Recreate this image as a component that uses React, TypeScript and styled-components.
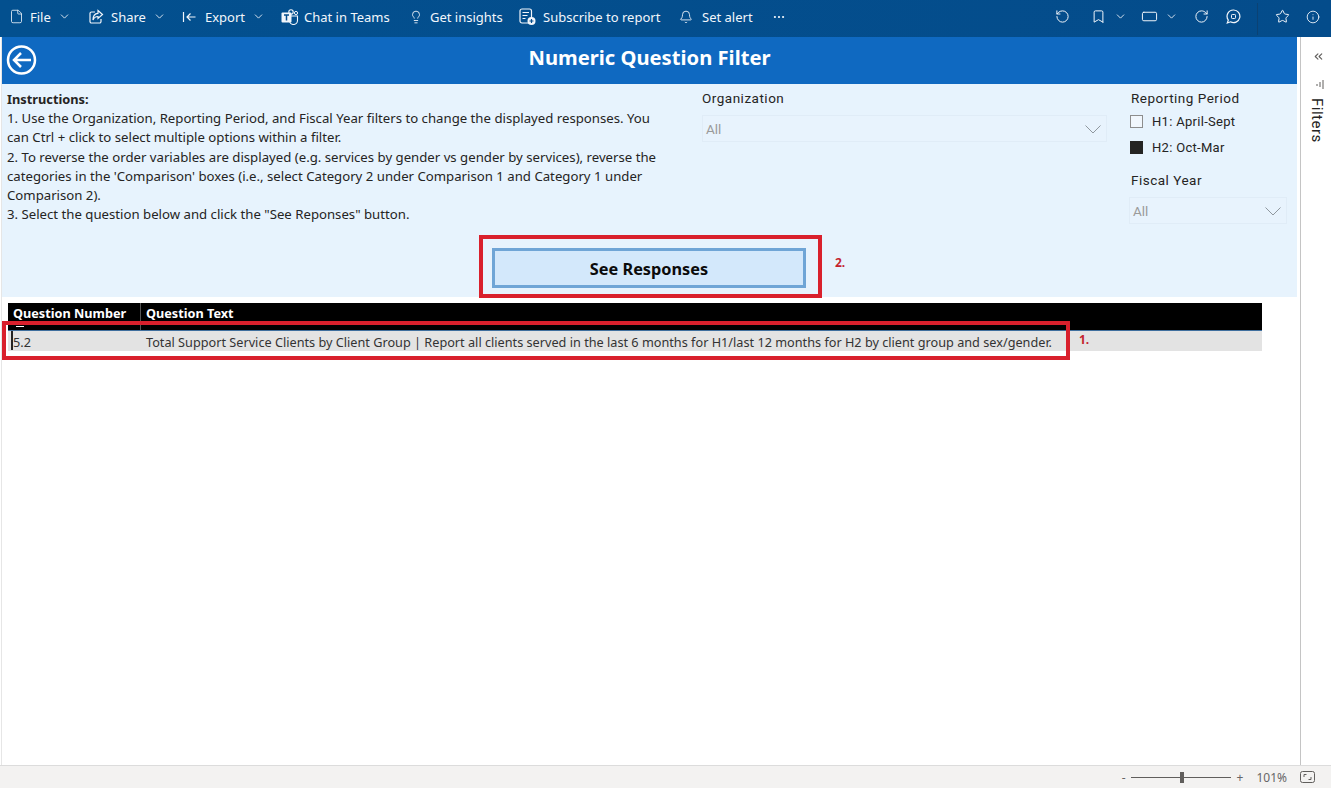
import React from 'react';
import styled, { createGlobalStyle } from 'styled-components';
import {
    Bell,
    Bookmark,
    ChevronDown,
    ChevronsLeft,
    Ellipsis,
    File,
    Info,
    Lightbulb,
    RectangleHorizontal,
    RotateCcw,
    RotateCw,
    Star,
} from 'lucide-react';

const GlobalStyle = createGlobalStyle`
    html, body {
        margin: 0;
        padding: 0;
        height: 100%;
        background: #ffffff;
        font-family: "Noto Sans", "Open Sans", sans-serif;
        overflow: hidden;
    }
`;

const Shell = styled.div`
    width: 1331px;
    height: 788px;
    display: flex;
    flex-direction: column;
    position: relative;
`;

const Toolbar = styled.div`
    height: 37px;
    flex: none;
    box-sizing: border-box;
    display: flex;
    align-items: center;
    padding: 0 11px 4px 9px;
    background: linear-gradient(90deg, #03508f, #044c8b);
    color: #f2f6fb;
    font-size: 13px;
`;

const ToolItem = styled.div<{ $w: number }>`
    width: ${(p) => p.$w}px;
    flex: none;
    display: flex;
    align-items: center;
    white-space: nowrap;
    svg { flex: none; }
`;

const ToolLabel = styled.span<{ $gap: number }>`
    margin-left: ${(p) => p.$gap}px;
    margin-right: 7px;
`;

const ToolChevron = styled.span<{ $gap: number }>`
    margin-left: ${(p) => p.$gap}px;
    display: flex;
`;

const ToolSpacer = styled.div`
    flex: 1;
`;

const ToolDivider = styled.div`
    width: 1px;
    height: 32px;
    margin: 4px 17px 0 13px;
    background: #0b4274;
`;

const Middle = styled.div`
    flex: 1;
    min-height: 0;
    display: flex;
`;

const Canvas = styled.div`
    width: 1295px;
    margin-left: 1px;
    border-left: 1px solid #e6e6e6;
    flex: none;
    display: flex;
    flex-direction: column;
`;

const Banner = styled.div`
    height: 47px;
    flex: none;
    box-sizing: border-box;
    background: #0f69c1;
    display: flex;
    align-items: center;
    justify-content: center;
    position: relative;
    color: #ffffff;
    font-size: 20.2px;
    font-weight: 700;
    padding-bottom: 8px;
`;

const BackButton = styled.svg`
    position: absolute;
    left: 4px;
    top: 7px;
`;

const FilterArea = styled.div`
    height: 213px;
    flex: none;
    background: #e7f3fd;
    display: flex;
    flex-direction: column;
`;

const FilterColumns = styled.div`
    display: grid;
    grid-template-columns: 700px 405px 1fr;
    height: 151px;
`;

const Instructions = styled.div`
    padding: 6px 0 0 5px;
    font-size: 13.2px;
    line-height: 19.2px;
    color: #252423;
    white-space: nowrap;
`;

const InstructionsTitle = styled.div`
    font-weight: 700;
    font-size: 12.8px;
`;

const SlicerLabel = styled.div`
    font-family: "Roboto", sans-serif;
    font-size: 13.5px;
    letter-spacing: 0.5px;
    color: #252423;
    line-height: 16px;
`;

const OrgColumn = styled.div`
    padding-top: 6px;
`;

const Dropdown = styled.div<{ $w: number }>`
    width: ${(p) => p.$w}px;
    height: 27px;
    box-sizing: border-box;
    margin-top: 9px;
    padding: 1px 5px 0 3px;
    border: 1px solid #e0ecf7;
    background: #e8f3fd;
    display: flex;
    align-items: center;
    justify-content: space-between;
    font-family: "Roboto", sans-serif;
    font-size: 13.5px;
    color: #9a9a9a;
`;

const FiscalDropdown = styled(Dropdown)`
    margin-left: -2px;
`;

const PeriodColumn = styled.div`
    padding: 6px 0 0 24px;
`;

const CheckRow = styled.div`
    display: flex;
    align-items: center;
    height: 26px;
    font-family: "Roboto", sans-serif;
    font-size: 13px;
    letter-spacing: 0.3px;
    color: #252423;
`;

const CheckList = styled.div`
    margin-top: 2px;
`;

const CheckBox = styled.span<{ $on?: boolean }>`
    width: 13px;
    height: 13px;
    box-sizing: border-box;
    flex: none;
    margin: 0 9px 0 -1px;
    border: 1px solid ${(p) => (p.$on ? '#252423' : '#8d8d8d')};
    background: ${(p) => (p.$on ? '#252423' : '#f1f7fd')};
`;

const FiscalLabel = styled(SlicerLabel)`
    margin-top: 12px;
`;

const ButtonRow = styled.div`
    display: flex;
    justify-content: center;
`;

const ResponsesButton = styled.div`
    width: 314px;
    height: 40px;
    margin-top: 13px;
    margin-left: -1px;
    box-sizing: border-box;
    border: 3px solid #6fa5d6;
    background: #d3e8fb;
    display: flex;
    align-items: center;
    justify-content: center;
    padding-top: 1px;
    font-size: 16.3px;
    font-weight: 700;
    color: #0b0b0b;
`;

const ReportBody = styled.div`
    flex: 1;
    background: #ffffff;
    padding: 6px 0 0 6px;
`;

const Table = styled.div`
    width: 1254px;
    font-size: 12.7px;
`;

const HeaderRow = styled.div`
    height: 27px;
    background: #000000;
    color: #ffffff;
    font-weight: 700;
    display: grid;
    grid-template-columns: 132px 1fr;
    border-bottom: 1px solid #3f6f9e;
    position: relative;
`;

const HeaderCell = styled.div`
    display: flex;
    align-items: center;
    padding: 0 0 8px 5px;
    & + & { border-left: 1px solid #555555; }
`;

const SortMark = styled.span`
    position: absolute;
    left: 8px;
    bottom: 3px;
    width: 8px;
    height: 1px;
    background: #ffffff;
`;

const DataRow = styled.div`
    height: 20px;
    background: #e3e3e3;
    color: #333333;
    display: grid;
    grid-template-columns: 132px 1fr;
    align-items: center;
    position: relative;
`;

const DataCell = styled.div`
    padding: 1px 0 0 5px;
    white-space: nowrap;
`;

const TextCell = styled(DataCell)`
    padding-left: 6px;
`;

const RowMarker = styled.span`
    position: absolute;
    left: 3px;
    top: 0;
    bottom: 1px;
    width: 2px;
    background: #252423;
`;

const RedBox = styled.div<{ $l: number; $t: number; $w: number; $h: number }>`
    position: absolute;
    left: ${(p) => p.$l}px;
    top: ${(p) => p.$t}px;
    width: ${(p) => p.$w}px;
    height: ${(p) => p.$h}px;
    box-sizing: border-box;
    border: 4px solid #d9202c;
    pointer-events: none;
`;

const RedNumber = styled.span<{ $l: number; $t: number }>`
    position: absolute;
    left: ${(p) => p.$l}px;
    top: ${(p) => p.$t}px;
    color: #c4242e;
    font-size: 12px;
    font-weight: 700;
    line-height: 14px;
`;

const FiltersPane = styled.div`
    width: 31px;
    margin-left: 3px;
    flex: none;
    box-sizing: border-box;
    border-left: 1px solid #c4c4c4;
    display: flex;
    flex-direction: column;
    align-items: center;
    padding: 13px 0 0 2px;
    color: #252423;
`;

const CollapseIcon = styled(ChevronsLeft)`
    color: #605e5c;
    margin-left: 3px;
`;

const FilterGlyph = styled.svg`
    margin: 17px 0 0 6px;
`;

const FiltersText = styled.div`
    writing-mode: vertical-rl;
    font-family: "Roboto", sans-serif;
    font-size: 15px;
    letter-spacing: 0.5px;
    margin-top: 9px;
`;

const StatusBar = styled.div`
    height: 23px;
    flex: none;
    box-sizing: border-box;
    background: #f3f2f1;
    border-top: 1px solid #dcdcdc;
    display: flex;
    align-items: center;
    justify-content: flex-end;
    padding-right: 16px;
    font-size: 12px;
    color: #666666;
`;

const ZoomTrack = styled.div`
    width: 100px;
    height: 1px;
    background: #605e5c;
    margin: 0 6px 0 5px;
    position: relative;
`;

const ZoomThumb = styled.span`
    position: absolute;
    left: 49px;
    top: -5px;
    width: 4px;
    height: 11px;
    background: #605e5c;
`;

const ZoomPercent = styled.span`
    margin: 0 13px 0 13px;
`;

const ShareIcon = () => (
    <svg width="16" height="16" viewBox="0 0 16 16" fill="none" stroke="currentColor" strokeWidth="1.2">
        <path d="M7 3H3.500A1.500 1.500 0 0 0 2 4.500v8A1.500 1.500 0 0 0 3.500 14h8a1.500 1.500 0 0 0 1.500-1.500V10" />
        <path d="M10 1.500 14.500 5.500 10 9.500V7.500C7.500 7.500 6 8.500 5 11c0-4 2-6.500 5-6.700Z" />
    </svg>
);

const ExportIcon = () => (
    <svg width="15" height="14" viewBox="0 0 15 14" fill="none" stroke="currentColor" strokeWidth="1.2">
        <path d="M1.500 2v10M13.500 7H5M8.500 3.500 5 7l3.500 3.500" />
    </svg>
);

const TeamsIcon = () => (
    <svg width="18" height="16" viewBox="0 0 18 16" fill="none">
        <circle cx="10" cy="3" r="2.200" stroke="currentColor" strokeWidth="1.100" />
        <circle cx="15" cy="4" r="1.600" stroke="currentColor" strokeWidth="1" />
        <path d="M8 7h8.500v4.500a4 4 0 0 1-8 0Z" stroke="currentColor" strokeWidth="1.100" />
        <rect x="0.500" y="3.500" width="10" height="10" rx="1" fill="currentColor" />
        <path d="M3 6h5M5.500 6v5.500" stroke="#044c8b" strokeWidth="1.500" />
    </svg>
);

const SubscribeIcon = () => (
    <svg width="17" height="18" viewBox="0 0 17 18" fill="none">
        <rect x="1" y="1" width="11.500" height="14" rx="2" stroke="currentColor" strokeWidth="1.200" />
        <path d="M3.500 4.500h6.500M3.500 7.500h5M3.500 10.500h3" stroke="currentColor" strokeWidth="1.200" />
        <circle cx="12.500" cy="13" r="4" fill="currentColor" />
        <path d="M10.500 13h4M12.500 11v4" stroke="#044c8b" strokeWidth="1.200" />
    </svg>
);

const CommentIcon = () => (
    <svg width="15" height="15" viewBox="0 0 15 15" fill="none">
        <path
            d="M7.500 1a6.300 6.300 0 1 1-3 11.800L1.300 14l1-3A6.300 6.300 0 0 1 7.500 1Z"
            stroke="currentColor"
            strokeWidth="1.200"
        />
        <rect x="5.500" y="5.500" width="4" height="4" rx="0.800" stroke="currentColor" strokeWidth="1" />
    </svg>
);

const DropChevron = () => (
    <svg width="16" height="9" viewBox="0 0 16 9" fill="none" stroke="#8f979e" strokeWidth="1">
        <path d="M0.500 0.500 8 8 15.500 0.500" />
    </svg>
);

const chevron = <ChevronDown size={13} strokeWidth={1.6} />;

const instructionLines = [
    '1. Use the Organization, Reporting Period, and Fiscal Year filters to change the displayed responses. You',
    'can Ctrl + click to select multiple options within a filter.',
    '2. To reverse the order variables are displayed (e.g. services by gender vs gender by services), reverse the',
    "categories in the 'Comparison' boxes (i.e., select Category 2 under Comparison 1 and Category 1 under",
    'Comparison 2).',
    '3. Select the question below and click the "See Reponses" button.',
];

const App: React.FC = () => {
    return (
        <Shell>
            <GlobalStyle />
            <Toolbar>
                <ToolItem $w={79}>
                    <File size={15} strokeWidth={1.3} />
                    <ToolLabel $gap={6}>File</ToolLabel>
                    {chevron}
                </ToolItem>
                <ToolItem $w={94}>
                    <ShareIcon />
                    <ToolLabel $gap={7}>Share</ToolLabel>
                    {chevron}
                </ToolItem>
                <ToolItem $w={99}>
                    <ExportIcon />
                    <ToolLabel $gap={8}>Export</ToolLabel>
                    {chevron}
                </ToolItem>
                <ToolItem $w={128}>
                    <TeamsIcon />
                    <ToolLabel $gap={5}>Chat in Teams</ToolLabel>
                </ToolItem>
                <ToolItem $w={110}>
                    <Lightbulb size={14} strokeWidth={1.5} />
                    <ToolLabel $gap={7}>Get insights</ToolLabel>
                </ToolItem>
                <ToolItem $w={160}>
                    <SubscribeIcon />
                    <ToolLabel $gap={7}>Subscribe to report</ToolLabel>
                </ToolItem>
                <ToolItem $w={93}>
                    <Bell size={14} strokeWidth={1.5} />
                    <ToolLabel $gap={9}>Set alert</ToolLabel>
                </ToolItem>
                <Ellipsis size={14} strokeWidth={1.8} />
                <ToolSpacer />
                <ToolItem $w={36}>
                    <RotateCcw size={15} strokeWidth={1.6} />
                </ToolItem>
                <ToolItem $w={50}>
                    <Bookmark size={15} strokeWidth={1.6} />
                    <ToolChevron $gap={8}>{chevron}</ToolChevron>
                </ToolItem>
                <ToolItem $w={53}>
                    <RectangleHorizontal size={17} strokeWidth={1.4} />
                    <ToolChevron $gap={7}>{chevron}</ToolChevron>
                </ToolItem>
                <ToolItem $w={32}>
                    <RotateCw size={15} strokeWidth={1.6} />
                </ToolItem>
                <ToolItem $w={18}>
                    <CommentIcon />
                </ToolItem>
                <ToolDivider />
                <ToolItem $w={31}>
                    <Star size={15} strokeWidth={1.6} />
                </ToolItem>
                <Info size={14} strokeWidth={1.5} />
            </Toolbar>
            <Middle>
                <Canvas>
                    <Banner>
                        <BackButton width="32" height="32" viewBox="0 0 32 32" fill="none" stroke="#ffffff">
                            <circle cx="15.500" cy="16" r="13.500" strokeWidth="2.500" />
                            <path d="M25 16H8M15 9l-7 7 7 7" strokeWidth="2.500" />
                        </BackButton>
                        Numeric Question Filter
                    </Banner>
                    <FilterArea>
                        <FilterColumns>
                            <Instructions>
                                <InstructionsTitle>Instructions:</InstructionsTitle>
                                {instructionLines.map((line) => (
                                    <div key={line}>{line}</div>
                                ))}
                            </Instructions>
                            <OrgColumn>
                                <SlicerLabel>Organization</SlicerLabel>
                                <Dropdown $w={405}>
                                    All
                                    <DropChevron />
                                </Dropdown>
                            </OrgColumn>
                            <PeriodColumn>
                                <SlicerLabel>Reporting Period</SlicerLabel>
                                <CheckList>
                                    <CheckRow>
                                        <CheckBox />
                                        H1: April-Sept
                                    </CheckRow>
                                    <CheckRow>
                                        <CheckBox $on />
                                        H2: Oct-Mar
                                    </CheckRow>
                                </CheckList>
                                <FiscalLabel>Fiscal Year</FiscalLabel>
                                <FiscalDropdown $w={158}>
                                    All
                                    <DropChevron />
                                </FiscalDropdown>
                            </PeriodColumn>
                        </FilterColumns>
                        <ButtonRow>
                            <ResponsesButton>See Responses</ResponsesButton>
                        </ButtonRow>
                    </FilterArea>
                    <ReportBody>
                        <Table>
                            <HeaderRow>
                                <HeaderCell>Question Number</HeaderCell>
                                <HeaderCell>Question Text</HeaderCell>
                                <SortMark />
                            </HeaderRow>
                            <DataRow>
                                <RowMarker />
                                <DataCell>5.2</DataCell>
                                <TextCell>
                                    Total Support Service Clients by Client Group | Report all clients served in the last 6
                                    months for H1/last 12 months for H2 by client group and sex/gender.
                                </TextCell>
                            </DataRow>
                        </Table>
                    </ReportBody>
                </Canvas>
                <FiltersPane>
                    <CollapseIcon size={13} strokeWidth={2} />
                    <FilterGlyph width="8" height="9" viewBox="0 0 8 9" stroke="#605e5c" strokeWidth="1">
                        <path d="M1 4v2M4 2v5M7 0v9" />
                    </FilterGlyph>
                    <FiltersText>Filters</FiltersText>
                </FiltersPane>
            </Middle>
            <StatusBar>
                <span>-</span>
                <ZoomTrack>
                    <ZoomThumb />
                </ZoomTrack>
                <span>+</span>
                <ZoomPercent>101%</ZoomPercent>
                <svg width="15" height="12" viewBox="0 0 15 12" fill="none" stroke="#605e5c" strokeWidth="1">
                    <rect x="0.500" y="0.500" width="14" height="11" rx="2" />
                    <path d="M4 6V3.500h2.500M11 6v2.500H8.500" />
                </svg>
            </StatusBar>
            <RedBox $l={479} $t={235} $w={343} $h={63} />
            <RedBox $l={2} $t={321} $w={1068} $h={39} />
            <RedNumber $l={835} $t={256}>2.</RedNumber>
            <RedNumber $l={1079} $t={333}>1.</RedNumber>
        </Shell>
    );
};

export default App;
